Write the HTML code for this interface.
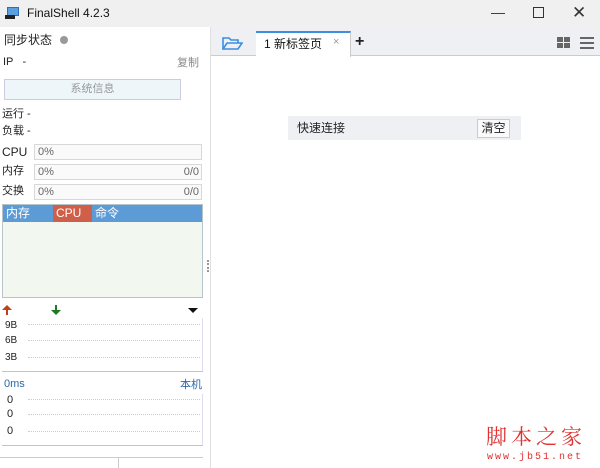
<!DOCTYPE html>
<html><head><meta charset="utf-8"><style>
*{margin:0;padding:0;box-sizing:border-box}
body{width:600px;height:468px;overflow:hidden;background:#fff;font-family:"Liberation Sans","Noto Sans CJK SC",sans-serif;font-size:11px;color:#222;position:relative;line-height:1.2}
.a{position:absolute;white-space:nowrap}
.bar{position:absolute;left:34px;width:168px;height:16px;border:1px solid #d8d8d8;background:#fafafa;font-size:11px;color:#666;padding-left:3px;line-height:14px}
.dot{position:absolute;border-top:1px dotted #ccc;left:28px;width:172px}
.h{line-height:17px;top:205px;color:#fff;font-size:12px}
</style></head><body>
<div class="a" style="left:0;top:0;width:600px;height:27px;background:#f0f0f0"></div>
<svg class="a" style="left:5px;top:7px" width="14" height="12"><rect x="2" y="0" width="12" height="9" fill="#2d6fb8"/><rect x="3" y="1" width="10" height="7" fill="#5aa0e0"/><rect x="0" y="8" width="10" height="4" fill="#222"/></svg>
<div class="a" style="left:27px;top:6px;font-size:12px;color:#111">FinalShell 4.2.3</div>
<div class="a" style="left:491px;top:4px;font-size:14px;color:#333">—</div>
<div class="a" style="left:533px;top:7px;width:11px;height:11px;border:1px solid #333"></div>
<div class="a" style="left:572px;top:3px;font-size:17px;color:#333">✕</div>

<div class="a" style="left:4px;top:33px;font-size:12px">同步状态</div>
<div class="a" style="left:60px;top:36px;width:8px;height:8px;border-radius:50%;background:#999"></div>
<div class="a" style="left:3px;top:56px;font-size:11px">IP&nbsp;&nbsp;&nbsp;-</div>
<div class="a" style="left:177px;top:57px;font-size:11px;color:#888">复制</div>
<div class="a" style="left:4px;top:79px;width:177px;height:21px;background:#eef6fa;border:1px solid #ccd;text-align:center;line-height:19px;color:#999;font-size:11px">系统信息</div>
<div class="a" style="left:2px;top:108px">运行 -</div>
<div class="a" style="left:2px;top:125px">负载 -</div>
<div class="a" style="left:2px;top:145px;font-size:12px">CPU</div>
<div class="bar" style="top:144px">0%</div>
<div class="a" style="left:2px;top:165px">内存</div>
<div class="bar" style="top:164px">0%<span style="position:absolute;right:2px">0/0</span></div>
<div class="a" style="left:2px;top:185px">交换</div>
<div class="bar" style="top:184px">0%<span style="position:absolute;right:2px">0/0</span></div>
<div class="a" style="left:2px;top:204px;width:201px;height:94px;border:1px solid #b8c4cc;background:#f2f8f0"></div>
<div class="a" style="left:3px;top:205px;width:199px;height:17px;background:#5d9bd6"></div>
<div class="a" style="left:53px;top:205px;width:39px;height:17px;background:#cf5f48"></div>
<div class="a h" style="left:6px">内存</div>
<div class="a h" style="left:56px">CPU</div>
<div class="a h" style="left:95px">命令</div>
<div class="a" style="left:207px;top:260px;width:2px;height:12px;border-left:2px dotted #999"></div>
<div class="a" style="left:210px;top:27px;width:1px;height:441px;background:#e0e0e0"></div>

<svg class="a" style="left:2px;top:305px" width="10" height="10"><path d="M5 10V4" stroke="#c0401a" stroke-width="2"/><path d="M0 5L5 0L10 5z" fill="#c0401a"/></svg>
<svg class="a" style="left:51px;top:305px" width="10" height="10"><path d="M5 0V6" stroke="#1f7a1f" stroke-width="2"/><path d="M0 5L5 10L10 5z" fill="#1f7a1f"/></svg>
<div class="a" style="left:188px;top:308px;width:0;height:0;border-left:5px solid transparent;border-right:5px solid transparent;border-top:5px solid #111"></div>
<div class="a" style="left:5px;top:320px;font-size:10px">9B</div>
<div class="a" style="left:5px;top:335px;font-size:10px">6B</div>
<div class="a" style="left:5px;top:352px;font-size:10px">3B</div>
<div class="dot" style="top:324px"></div><div class="dot" style="top:340px"></div><div class="dot" style="top:357px"></div>
<div class="a" style="left:202px;top:318px;width:1px;height:53px;background:#dde"></div>
<div class="a" style="left:2px;top:371px;width:201px;height:1px;background:#b8c8d8"></div>
<div class="a" style="left:4px;top:378px;color:#2a6aaa;font-size:11px">0ms</div>
<div class="a" style="left:180px;top:379px;color:#2a6aaa;font-size:11px">本机</div>
<div class="a" style="left:7px;top:394px;font-size:11px">0</div>
<div class="a" style="left:7px;top:408px;font-size:11px">0</div>
<div class="a" style="left:7px;top:425px;font-size:11px">0</div>
<div class="dot" style="top:399px"></div><div class="dot" style="top:414px"></div><div class="dot" style="top:431px"></div>
<div class="a" style="left:202px;top:394px;width:1px;height:51px;background:#dde"></div>
<div class="a" style="left:2px;top:445px;width:201px;height:1px;background:#b8c8d8"></div>
<div class="a" style="left:0;top:457px;width:203px;height:11px;border-top:1px solid #ccc"></div>
<div class="a" style="left:118px;top:457px;width:1px;height:11px;background:#ccc"></div>

<div class="a" style="left:211px;top:27px;width:389px;height:29px;background:#eef0f3;border-bottom:1px solid #ccc"></div>
<svg class="a" style="left:222px;top:36px" width="21" height="15" fill="none" stroke="#3b8ee0" stroke-width="1.6"><path d="M1 13V2h6l2 2h7v3"/><path d="M1 13l4-6h15l-4 6z"/></svg>
<div class="a" style="left:256px;top:31px;width:95px;height:26px;background:#fff;border-top:2px solid #3b8ee0;border-right:1px solid #ccc"></div>
<div class="a" style="left:264px;top:37px;font-size:12px;color:#111">1 新标签页</div>
<div class="a" style="left:333px;top:36px;font-size:11px;color:#999">×</div>
<div class="a" style="left:355px;top:32px;font-size:16px;font-weight:bold">+</div>
<svg class="a" style="left:557px;top:37px" width="40" height="12"><g fill="#666"><rect x="0" y="0" width="6" height="5"/><rect x="7" y="0" width="6" height="5"/><rect x="0" y="6" width="6" height="5"/><rect x="7" y="6" width="6" height="5"/><rect x="23" y="0" width="14" height="2"/><rect x="23" y="5" width="14" height="2"/><rect x="23" y="10" width="14" height="2"/></g></svg>

<div class="a" style="left:288px;top:116px;width:233px;height:24px;background:#eef0f4"></div>
<div class="a" style="left:297px;top:121px;font-size:12px">快速连接</div>
<div class="a" style="left:477px;top:119px;width:33px;height:19px;border:1px solid #ccc;background:#fafafa;font-size:12px;text-align:center;line-height:17px">清空</div>

<div class="a" style="left:486px;top:424px;font-size:21px;color:#e03030;font-family:'Noto Serif CJK SC',serif;letter-spacing:4px">脚本之家</div>
<div class="a" style="left:487px;top:452px;font-size:10px;color:#e03030;font-family:'Liberation Mono',monospace;letter-spacing:2px">www.jb51.net</div>
</body></html>
